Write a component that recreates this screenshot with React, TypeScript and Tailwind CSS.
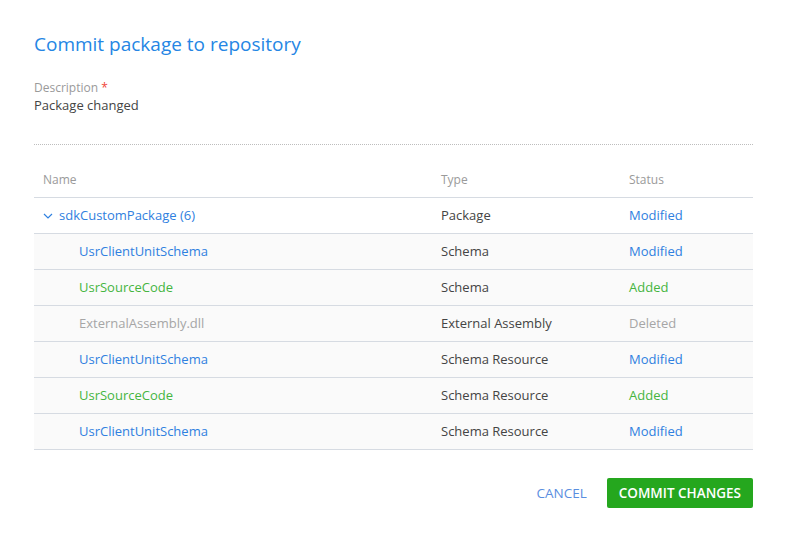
import React from "react";

type Row = { name: string; type: string; status: string; kind: "mod" | "add" | "del"; child: boolean; };

const rows: Row[] = [
  { name: "sdkCustomPackage (6)", type: "Package", status: "Modified", kind: "mod", child: false },
  { name: "UsrClientUnitSchema", type: "Schema", status: "Modified", kind: "mod", child: true },
  { name: "UsrSourceCode", type: "Schema", status: "Added", kind: "add", child: true },
  { name: "ExternalAssembly.dll", type: "External Assembly", status: "Deleted", kind: "del", child: true },
  { name: "UsrClientUnitSchema", type: "Schema Resource", status: "Modified", kind: "mod", child: true },
  { name: "UsrSourceCode", type: "Schema Resource", status: "Added", kind: "add", child: true },
  { name: "UsrClientUnitSchema", type: "Schema Resource", status: "Modified", kind: "mod", child: true },
];

const colorFor = (k: Row["kind"]) =>
  k === "mod" ? "text-[#2f80e0]" : k === "add" ? "text-[#45b53f]" : "text-[#a6a6a6]";

export default function App() {
  return (
    <div className="w-[787px] h-[551px] bg-white font-['Open_Sans',sans-serif] px-[34px] pt-[30px]">
      <h1 className="text-[19px] leading-[28px] text-[#2586e4] font-normal">Commit package to repository</h1>
      <div className="mt-[21px] text-[12px] leading-[17px] text-[#9a9a9a]">
        Description <span className="text-[#f0453a]">*</span>
      </div>
      <div className="text-[13px] leading-[18px] text-[#444]">Package changed</div>
      <div className="mt-[30px] border-t border-dotted border-[#bdbdbd]"></div>
      <div className="mt-[18px]">
        <div className="flex h-[35px] items-center border-b border-[#d6dbe2] text-[12px] text-[#9a9a9a]">
          <div className="w-[398px] pl-[9px]">Name</div>
          <div className="w-[188px] pl-[9px]">Type</div>
          <div className="flex-1 pl-[9px]">Status</div>
        </div>
        {rows.map((r, i) => (
          <div
            key={i}
            className={`flex h-[36px] items-center border-b border-[#d6dbe2] text-[13px] ${r.child ? "bg-[#fafafa]" : "bg-white"}`}
          >
            <div className={`w-[398px] flex items-center ${r.child ? "pl-[45px]" : "pl-[9px]"} ${colorFor(r.kind)}`}>
              {!r.child && (
                <svg width="10" height="10" viewBox="0 0 10 10" className="mr-[6px]">
                  <path d="M1 3 L5 7 L9 3" fill="none" stroke="#2f80e0" strokeWidth="1.2" />
                </svg>
              )}
              {r.name}
            </div>
            <div className="w-[188px] pl-[9px] text-[#444]">{r.type}</div>
            <div className={`flex-1 pl-[9px] ${colorFor(r.kind)}`}>{r.status}</div>
          </div>
        ))}
      </div>
      <div className="mt-[28px] flex justify-end items-center gap-[20px]">
        <button className="text-[13.5px] text-[#5a8ee0] uppercase">Cancel</button>
        <button className="h-[30px] px-[12px] rounded-[2px] bg-[#25a71e] text-white text-[13.5px] font-semibold uppercase">
          Commit changes
        </button>
      </div>
    </div>
  );
}
